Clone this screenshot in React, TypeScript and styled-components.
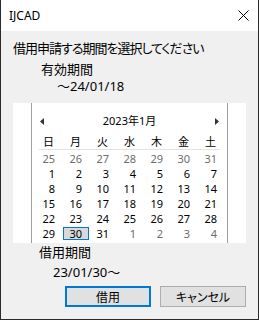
import React from "react";
import styled, { createGlobalStyle } from "styled-components";

const Global = createGlobalStyle`
  html, body { margin: 0; padding: 0; background: #ffffff; }
  body { font-family: "Noto Sans", "Noto Sans CJK JP", sans-serif; }
`;

const Window = styled.div`
  width: 259px;
  height: 320px;
  box-sizing: border-box;
  border: 1px solid #2b2b2b;
  border-top: none;
  background: #f0f0f0;
  display: flex;
  flex-direction: column;
`;

const TitleBar = styled.div`
  height: 31px;
  flex-shrink: 0;
  background: #ffffff;
  display: flex;
  align-items: center;
  justify-content: space-between;
  padding: 0 9px 0 8px;
`;

const TitleText = styled.span`
  font-family: "Noto Sans", sans-serif;
  font-size: 12px;
  color: #000;
`;

const Body = styled.div`
  display: flex;
  flex-direction: column;
  padding: 9px 12px 12px 12px;
`;

const Line = styled.div<{ $indent?: number; $mt?: number; $tight?: boolean }>`
  font-family: "Noto Sans", "Noto Sans CJK JP", sans-serif;
  font-size: 13px;
  line-height: 17px;
  height: 17px;
  color: #000;
  white-space: nowrap;
  font-feature-settings: "palt";
  letter-spacing: ${(p) => (p.$tight ? "-1px" : "0")};
  margin-left: ${(p) => p.$indent ?? 0}px;
  margin-top: ${(p) => p.$mt ?? 0}px;
`;

const Panel = styled.div`
  margin-top: 8px;
  height: 140px;
  background: #ffffff;
  display: flex;
  justify-content: center;
`;

const Calendar = styled.div`
  width: 197px;
  height: 100%;
  box-sizing: border-box;
  border-left: 1px solid #a0a0a0;
  border-right: 1px solid #a0a0a0;
  padding: 9px 3px 0 3px;
  font-family: "Noto Sans", "Noto Sans CJK JP", sans-serif;
  font-size: 11px;
  color: #000;
`;

const NavRow = styled.div`
  height: 18px;
  display: flex;
  align-items: center;
  justify-content: space-between;
  padding: 0 5px;
`;

const MonthTitle = styled.span`
  font-size: 11px;
  line-height: 18px;
`;

const WeekRow = styled.div`
  margin-top: 4px;
  display: grid;
  grid-template-columns: repeat(7, 27px);
  height: 15px;
`;

const WeekDay = styled.span`
  text-align: center;
  line-height: 15px;
  font-size: 11px;
`;

const Divider = styled.div`
  height: 1px;
  margin: 0 4px;
  background: #e3e3e3;
`;

const DayGrid = styled.div`
  margin-top: 1px;
  display: grid;
  grid-template-columns: repeat(7, 27px);
  grid-auto-rows: 15px;
`;

const DayCell = styled.div`
  display: flex;
  align-items: center;
`;

const DayLabel = styled.span<{ $muted?: boolean; $selected?: boolean }>`
  width: 26px;
  height: 13px;
  margin-left: 1px;
  box-sizing: border-box;
  border: 1px solid ${(p) => (p.$selected ? "#0078d7" : "transparent")};
  background: ${(p) => (p.$selected ? "#d9d9d9" : "transparent")};
  padding-right: 6px;
  text-align: right;
  line-height: 11px;
  font-size: 11px;
  color: ${(p) => (p.$muted ? "#6d6d6d" : "#000")};
`;

const ButtonRow = styled.div`
  margin-top: 5px;
  display: flex;
  justify-content: flex-end;
  gap: 9px;
`;

const Button = styled.button<{ $primary?: boolean }>`
  width: 86px;
  height: 21px;
  box-sizing: border-box;
  padding: 0;
  margin: 0;
  background: #e1e1e1;
  border: ${(p) => (p.$primary ? "2px solid #0078d7" : "1px solid #adadad")};
  font-family: "Noto Sans CJK JP", sans-serif;
  font-size: 12px;
  font-feature-settings: "palt";
  color: #000;
  display: flex;
  align-items: center;
  justify-content: center;
`;

const Arrow = ({ dir }: { dir: "left" | "right" }) => (
  <svg width="4" height="7" viewBox="0 0 4 7">
    {dir === "left" ? (
      <polygon points="4,0 4,7 0,3.5" fill="#333" />
    ) : (
      <polygon points="0,0 0,7 4,3.5" fill="#333" />
    )}
  </svg>
);

const CloseIcon = () => (
  <svg width="11" height="11" viewBox="0 0 11 11">
    <path d="M0.5 0.5 L10.5 10.5 M10.5 0.5 L0.5 10.5" stroke="#000" strokeWidth="1" />
  </svg>
);

const weekdays = ["日", "月", "火", "水", "木", "金", "土"];

type Day = { n: number; muted?: boolean; selected?: boolean };

const days: Day[] = [
  ...[25, 26, 27, 28, 29, 30, 31].map((n) => ({ n, muted: true })),
  ...Array.from({ length: 31 }, (_, i) => ({ n: i + 1, selected: i + 1 === 30 })),
  ...[1, 2, 3, 4].map((n) => ({ n, muted: true })),
];

export default function App() {
  return (
    <>
      <Global />
      <Window>
        <TitleBar>
          <TitleText>IJCAD</TitleText>
          <CloseIcon />
        </TitleBar>
        <Body>
          <Line $tight>借用申請する期間を選択してください</Line>
          <Line $indent={28} $mt={4}>有効期間</Line>
          <Line $indent={44}>〜24/01/18</Line>
          <Panel>
            <Calendar>
              <NavRow>
                <Arrow dir="left" />
                <MonthTitle>2023年1月</MonthTitle>
                <Arrow dir="right" />
              </NavRow>
              <WeekRow>
                {weekdays.map((w) => (
                  <WeekDay key={w}>{w}</WeekDay>
                ))}
              </WeekRow>
              <Divider />
              <DayGrid>
                {days.map((d, i) => (
                  <DayCell key={i}>
                    <DayLabel $muted={d.muted} $selected={d.selected}>
                      {d.n}
                    </DayLabel>
                  </DayCell>
                ))}
              </DayGrid>
            </Calendar>
          </Panel>
          <Line $indent={26} $mt={1}>借用期間</Line>
          <Line $indent={40} $mt={3}>23/01/30〜</Line>
          <ButtonRow>
            <Button $primary>借用</Button>
            <Button>キャンセル</Button>
          </ButtonRow>
        </Body>
      </Window>
    </>
  );
}
